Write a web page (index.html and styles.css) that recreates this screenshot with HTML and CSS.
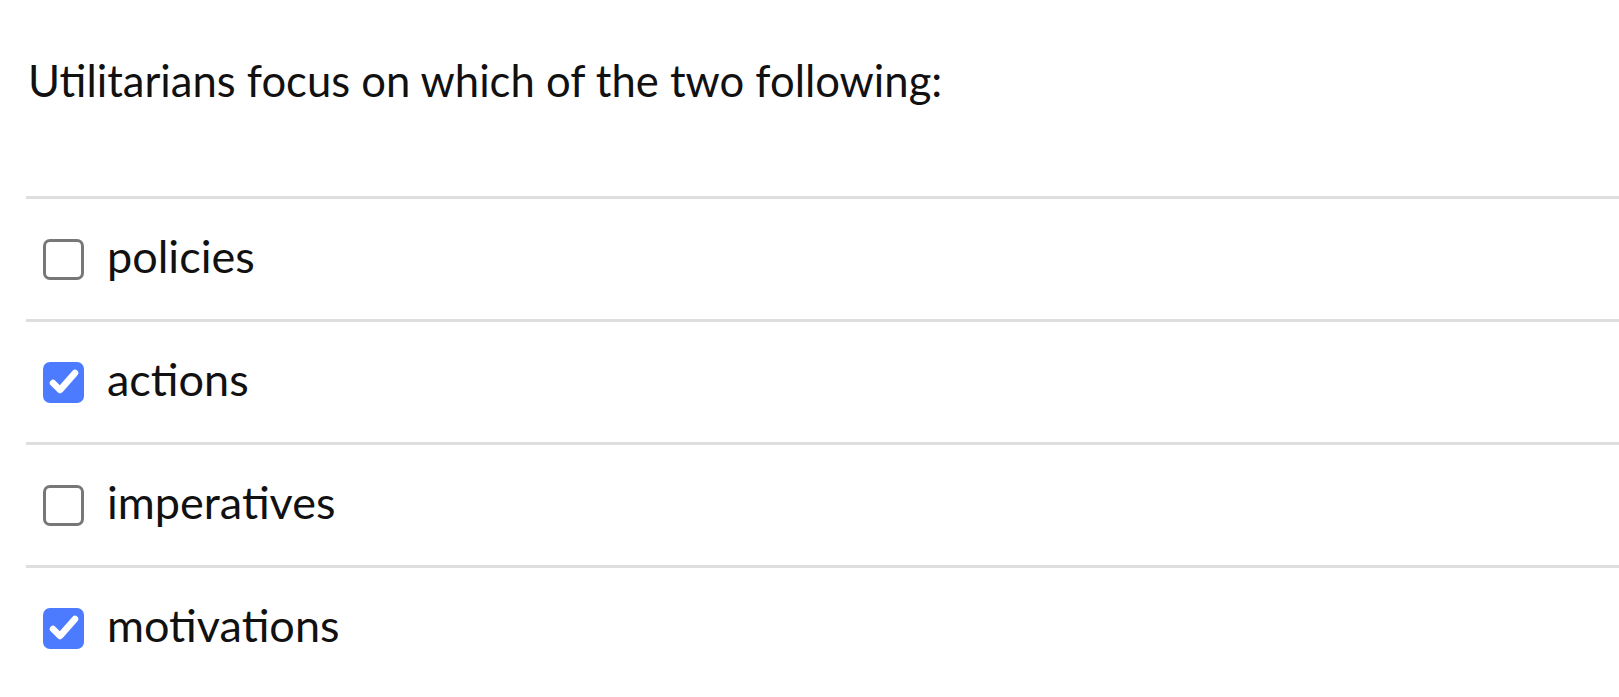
FILE: index.html
```html
<!DOCTYPE html>
<html lang="en">
<head>
  <meta charset="UTF-8">
  <title>Question</title>
  <link rel="stylesheet" href="styles.css">
</head>
<body>
<div class="question">
  <div class="question-text">Utilitarians focus on which of the two following:</div>

  <div class="options">
    <label class="option">
      <span class="box"></span>
      <span class="option-text">policies</span>
    </label>
    <label class="option">
      <span class="box checked">
        <svg viewBox="0 0 41 41" width="41" height="41"><path d="M10 21 L17 28 L32 11" fill="none" stroke="#fff" stroke-width="6.5" stroke-linecap="round" stroke-linejoin="round"/></svg>
      </span>
      <span class="option-text">actions</span>
    </label>
    <label class="option">
      <span class="box"></span>
      <span class="option-text">imperatives</span>
    </label>
    <label class="option">
      <span class="box checked">
        <svg viewBox="0 0 41 41" width="41" height="41"><path d="M10 21 L17 28 L32 11" fill="none" stroke="#fff" stroke-width="6.5" stroke-linecap="round" stroke-linejoin="round"/></svg>
      </span>
      <span class="option-text">motivations</span>
    </label>
  </div>
</div>
</body>
</html>
```

FILE: styles.css
```css
* { box-sizing: border-box; font-family: Lato, "Open Sans", sans-serif; }
body {
  margin: 0;
  padding: 0;
  background-color: #ffffff;
  color: #111111;
}
.question {
  padding: 50px 0 0 26px;
}
.question-text {
  font-size: 43.6px;
  line-height: 60px;
  padding-left: 2px;
  margin-bottom: 86px;
}
.option {
  display: flex;
  align-items: center;
  gap: 23px;
  height: 123px;
  padding-left: 17px;
  border-top: 3px solid #dedede;
  cursor: pointer;
}
.box {
  width: 41px;
  height: 41px;
  flex: none;
  border: 3px solid #777777;
  border-radius: 7px;
  background-color: #ffffff;
}
.box.checked {
  border: none;
  background-color: #4c7bff;
}
.box svg {
  display: block;
}
.option-text {
  font-size: 45px;
  line-height: 52px;
  margin-top: -6px;
}
```
